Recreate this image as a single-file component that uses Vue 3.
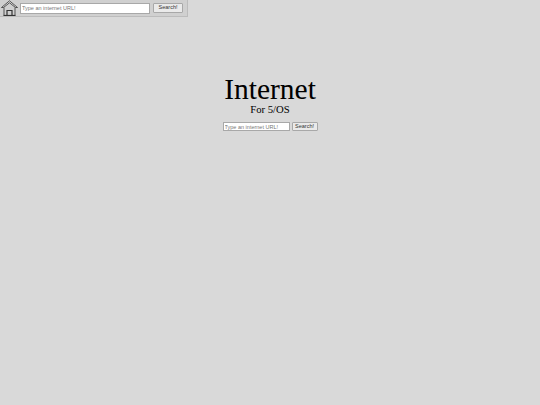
<script setup>
const placeholder = 'Type an internet URL!'
</script>

<template>
  <div class="page">
    <div class="toolbar">
      <svg class="home" viewBox="0 0 17 16" width="17" height="16" fill="none" stroke="#333" stroke-width="0.8">
        <path d="M0.5 7.5 L8.5 0.8 L16.5 7.5 L14.5 7.5 L8.5 2.8 L2.5 7.5 Z" fill="#ddd" />
        <path d="M3 7.5 V15.5 H14 V7.5" />
        <path d="M6 15.5 V10.5 H11 V15.5" stroke-width="1.2" />
        <path d="M2.5 15.5 H14.5" stroke-width="1.2" />
      </svg>
      <input class="field wide" :placeholder="placeholder" />
      <button class="btn top-btn">Search!</button>
    </div>
    <main class="hero">
      <h1>Internet</h1>
      <p>For 5/OS</p>
      <div class="row">
        <input class="field small" :placeholder="placeholder" />
        <button class="btn">Search!</button>
      </div>
    </main>
  </div>
</template>

<style>
body { margin: 0; }
</style>

<style scoped>
.page {
  width: 540px;
  height: 405px;
  background: #d9d9d9;
  overflow: hidden;
  font-family: "Liberation Sans", Arial, sans-serif;
}
.toolbar {
  display: flex;
  align-items: center;
  width: 188px;
  height: 17px;
  box-sizing: border-box;
  padding-left: 1px;
  background: #d0d0d0;
  border-right: 1px solid #bcbcbc;
  border-bottom: 1px solid #bcbcbc;
}
.home { flex: none; margin-right: 2px; }
.field {
  box-sizing: border-box;
  background: #fff;
  border: 1px solid #a8a8a8;
  padding: 0 0 0 1px;
  margin: 0;
  font-family: "Liberation Sans", Arial, sans-serif;
  font-size: 5.5px;
  outline: none;
}
.field::placeholder { color: #777; }
.wide { width: 130px; height: 11px; margin-right: 3px; }
.small { width: 67px; height: 9px; margin-right: 2px; }
.btn {
  box-sizing: border-box;
  width: 26px;
  height: 9px;
  padding: 0;
  margin: 0;
  background: #eaeaea;
  border: 1px solid #a8a8a8;
  border-radius: 1px;
  color: #333;
  font-family: "Liberation Sans", Arial, sans-serif;
  font-size: 5.5px;
  line-height: 1;
}
.top-btn { width: 30px; height: 10px; }
.hero {
  display: flex;
  flex-direction: column;
  align-items: center;
  padding-top: 57px;
  font-family: "Liberation Serif", "Times New Roman", serif;
  color: #000;
}
h1 {
  margin: 0;
  font-size: 29.5px;
  font-weight: 400;
  line-height: 30px;
}
p {
  margin: 0;
  font-size: 10.7px;
  line-height: 11px;
}
.row {
  display: flex;
  align-items: center;
  margin-top: 7px;
}
</style>
